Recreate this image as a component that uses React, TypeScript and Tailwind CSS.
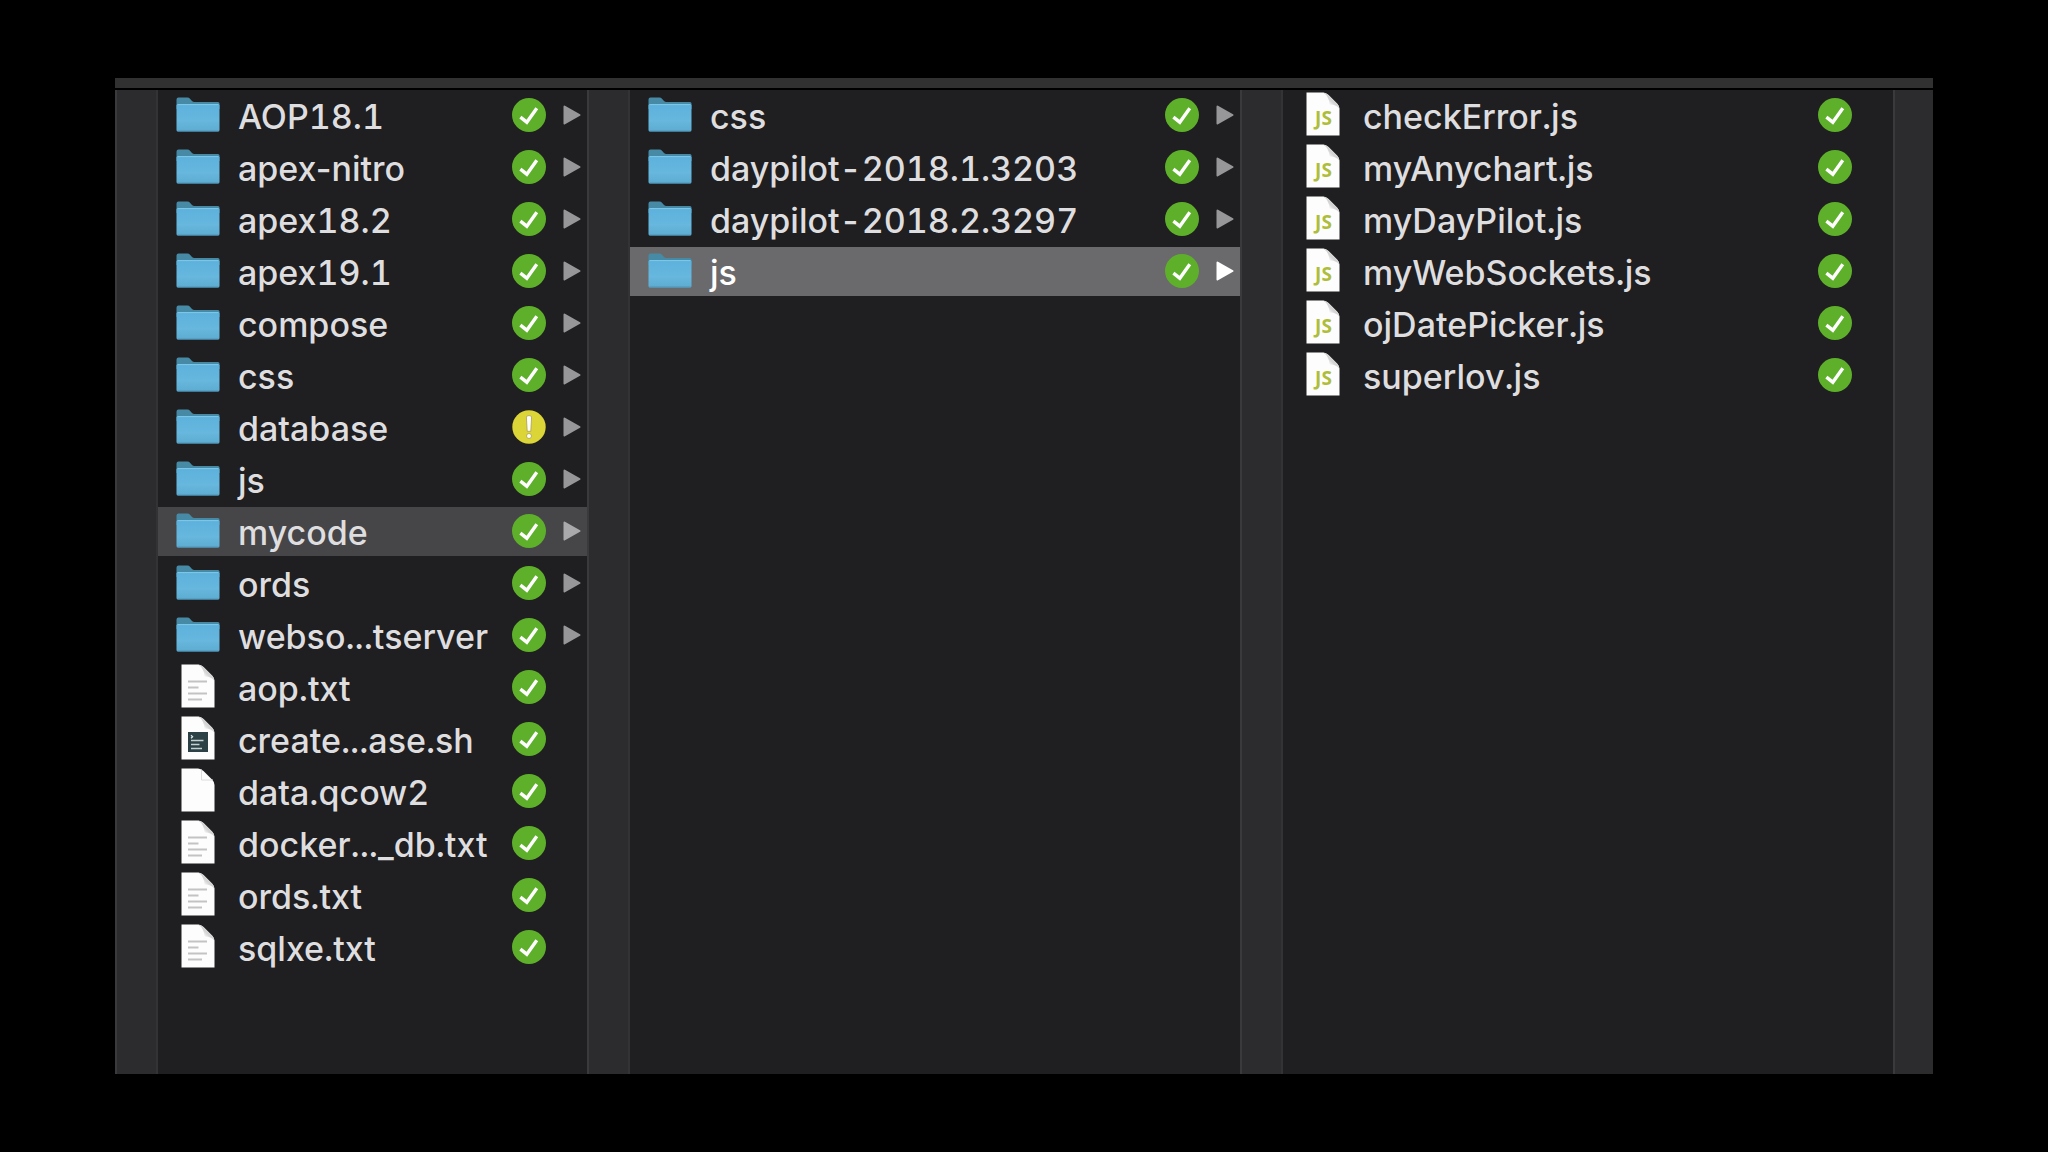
import { useState } from 'react';
import { clsx } from 'clsx';

type Kind = 'folder' | 'text' | 'shell' | 'blank' | 'js';

interface Entry {
  name: string;
  kind: Kind;
  status?: 'synced' | 'warning';
}

const ROOT: Entry[] = [
  { name: 'AOP18.1', kind: 'folder' },
  { name: 'apex-nitro', kind: 'folder' },
  { name: 'apex18.2', kind: 'folder' },
  { name: 'apex19.1', kind: 'folder' },
  { name: 'compose', kind: 'folder' },
  { name: 'css', kind: 'folder' },
  { name: 'database', kind: 'folder', status: 'warning' },
  { name: 'js', kind: 'folder' },
  { name: 'mycode', kind: 'folder' },
  { name: 'ords', kind: 'folder' },
  { name: 'webso...tserver', kind: 'folder' },
  { name: 'aop.txt', kind: 'text' },
  { name: 'create...ase.sh', kind: 'shell' },
  { name: 'data.qcow2', kind: 'blank' },
  { name: 'docker..._db.txt', kind: 'text' },
  { name: 'ords.txt', kind: 'text' },
  { name: 'sqlxe.txt', kind: 'text' },
];

const MYCODE: Entry[] = [
  { name: 'css', kind: 'folder' },
  { name: 'daypilot-2018.1.3203', kind: 'folder' },
  { name: 'daypilot-2018.2.3297', kind: 'folder' },
  { name: 'js', kind: 'folder' },
];

const SCRIPTS: Entry[] = [
  { name: 'checkError.js', kind: 'js' },
  { name: 'myAnychart.js', kind: 'js' },
  { name: 'myDayPilot.js', kind: 'js' },
  { name: 'myWebSockets.js', kind: 'js' },
  { name: 'ojDatePicker.js', kind: 'js' },
  { name: 'superlov.js', kind: 'js' },
];

// Shared gradients, referenced by id from every row icon
function IconDefs() {
  return (
    <svg className="absolute size-0" aria-hidden="true">
      <defs>
        <linearGradient id="folder-front" x1="0" y1="0" x2="0" y2="1">
          <stop offset="0" stopColor="#5cb1dc" />
          <stop offset="0.6" stopColor="#67b7de" />
          <stop offset="1" stopColor="#5dabd0" />
        </linearGradient>
        <linearGradient id="page-fold" x1="0" y1="1" x2="1" y2="0">
          <stop offset="0.3" stopColor="#ffffff" />
          <stop offset="0.5" stopColor="#d4d4d4" />
        </linearGradient>
      </defs>
    </svg>
  );
}

function FolderIcon() {
  return (
    <svg viewBox="0 0 44 35" className="h-[35px] w-[44px]" aria-hidden="true">
      <path d="M0.5 2.5Q0.5 0.5 2.5 0.5H11.5Q13 0.5 14 1.8L16 4Q17 5 18.5 5H42Q43.5 5 43.5 6.5V12H0.5Z" fill="#468aa5" />
      <rect x="0.5" y="7" width="43" height="27.5" rx="1.6" fill="url(#folder-front)" />
      <path d="M1.5 7.6H42.5" stroke="#7fc8e8" strokeWidth="1" />
      <path d="M1.5 33.9H42.5" stroke="#4f9abd" strokeWidth="1" />
    </svg>
  );
}

function PageIcon({ kind }: { kind: Kind }) {
  return (
    <svg viewBox="0 0 34 44" className="h-[44px] w-[34px]" aria-hidden="true">
      <path d="M0.5 0.5H17Q20 0.5 22.5 3L31 11.5Q33.5 14 33.5 17V43.5H0.5Z" fill="#fdfdfd" />
      {kind === 'blank' ? (
        <path d="M20.5 1.5V12H32" fill="none" stroke="#dcdcdc" strokeWidth="1" />
      ) : (
        <path d="M17 0.5Q20 0.5 22.5 3L31 11.5Q33.5 14 33.5 17Q31 12.5 23.5 12.5Q23 4 17 0.5Z" fill="url(#page-fold)" />
      )}
      {kind === 'text' && (
        <path d="M7 17.5H26M7 23.5H17.5M7 29.5H26M7 35.5H21" stroke="#c3c3c3" strokeWidth="2" />
      )}
      {kind === 'shell' && (
        <>
          <rect x="7" y="16" width="20" height="20" fill="#2b4145" />
          <path d="M10 19.3L11.6 20.8L10 22.2" fill="none" stroke="#dfe6e6" strokeWidth="1.2" />
          <path d="M10 24.5H22.5M10 28.5H18.5M10 32.5H21" stroke="#c5d0d0" strokeWidth="1.3" />
        </>
      )}
      {kind === 'js' && (
        <text
          x="17.5"
          y="33"
          textAnchor="middle"
          fontFamily="'Noto Sans', sans-serif"
          fontSize="19"
          fontWeight="700"
          fill="#afbd3c"
        >
          JS
        </text>
      )}
    </svg>
  );
}

function StatusBadge({ status = 'synced' }: { status?: Entry['status'] }) {
  if (status === 'warning') {
    return (
      <svg viewBox="0 0 34 34" className="size-[34px] shrink-0" role="img" aria-label="Needs attention">
        <circle cx="17" cy="17" r="16.7" fill="#dcd537" />
        <path
          d="M14.4 7Q14.4 5.6 17 5.6T19.6 7L18.8 21.3H15.2Z"
          fill="#fff"
          stroke="#aaa04c"
          strokeWidth="0.8"
        />
        <circle cx="17" cy="26" r="2.5" fill="#fff" stroke="#aaa04c" strokeWidth="0.8" />
      </svg>
    );
  }
  return (
    <svg viewBox="0 0 34 34" className="size-[34px] shrink-0" role="img" aria-label="Synced">
      <circle cx="17" cy="17" r="17" fill="#5eb02b" />
      <path d="M8.4 19.2L14.8 24.2L24.8 10.2" fill="none" stroke="#fff" strokeWidth="3.4" />
    </svg>
  );
}

function Arrow() {
  return (
    <svg viewBox="0 0 18 20" className="h-5 w-[18px] shrink-0" aria-hidden="true">
      <path
        d="M1.5 1.5L16.5 10L1.5 18.5Z"
        fill="currentColor"
        stroke="currentColor"
        strokeWidth="2"
        strokeLinejoin="round"
      />
    </svg>
  );
}

interface ColumnProps {
  label: string;
  entries: Entry[];
  selected?: string;
  active?: boolean;
  className?: string;
  onSelect: (name: string) => void;
}

function Column({ label, entries, selected, active, className, onSelect }: ColumnProps) {
  return (
    <ul aria-label={label} className={clsx('flex min-w-0 flex-col gap-[3px] bg-[#1f1e20] pt-px', className)}>
      {entries.map((entry) => {
        const isSelected = entry.name === selected;
        const isFolder = entry.kind === 'folder';
        return (
          <li key={entry.name}>
            <button
              type="button"
              aria-pressed={isSelected}
              onClick={() => onSelect(entry.name)}
              className={clsx(
                'flex h-[49px] w-full items-center pr-1.5 pl-[18px] text-left',
                isSelected && (active ? 'bg-[#6a696b] text-white' : 'bg-[#464548]')
              )}
            >
              <span className={clsx('flex w-11 shrink-0 justify-center', isFolder ? 'pb-[2px]' : 'pb-1')}>
                {isFolder ? <FolderIcon /> : <PageIcon kind={entry.kind} />}
              </span>
              <span
                className={clsx(
                  'ml-[18px] flex-1 pt-[2px] whitespace-nowrap',
                  !/-[a-z]/.test(entry.name) && 'tabular-nums'
                )}
              >
                {entry.name}
              </span>
              <span className="flex w-[69px] shrink-0 items-center gap-[17px] pb-[2px]">
                <StatusBadge status={entry.status} />
                {isFolder && (
                  <span className={isSelected ? (active ? 'text-white' : 'text-[#aaa9ab]') : 'text-[#979698]'}>
                    <Arrow />
                  </span>
                )}
              </span>
            </button>
          </li>
        );
      })}
    </ul>
  );
}

function Gutter() {
  return <div className="w-[43px] shrink-0 border-x-2 border-l-[#3a393b] border-r-[#333234] bg-[#2c2b2d]" />;
}

export default function App() {
  const [rootItem, setRootItem] = useState('mycode');
  const [codeItem, setCodeItem] = useState('js');
  const [script, setScript] = useState('');

  return (
    <main className="flex min-h-screen flex-col bg-black px-[115px] py-[78px] font-['Inter',sans-serif] text-[34px] leading-[44px] font-[450] text-[#dedddf]">
      <IconDefs />
      <div className="h-[10px] bg-[#313132]" />
      <div className="mt-[2px] flex flex-1">
        <Gutter />
        <Column
          label="Projects"
          entries={ROOT}
          selected={rootItem}
          onSelect={setRootItem}
          className="flex-[429_1_0]"
        />
        <Gutter />
        <Column
          label="mycode"
          entries={MYCODE}
          selected={codeItem}
          active
          onSelect={setCodeItem}
          className="flex-[610_1_0]"
        />
        <Gutter />
        <Column
          label="js"
          entries={SCRIPTS}
          selected={script}
          onSelect={setScript}
          className="flex-[610_1_0]"
        />
        <div className="w-10 shrink-0 border-l-2 border-[#3a393b] bg-[#2c2b2d]" />
      </div>
    </main>
  );
}
